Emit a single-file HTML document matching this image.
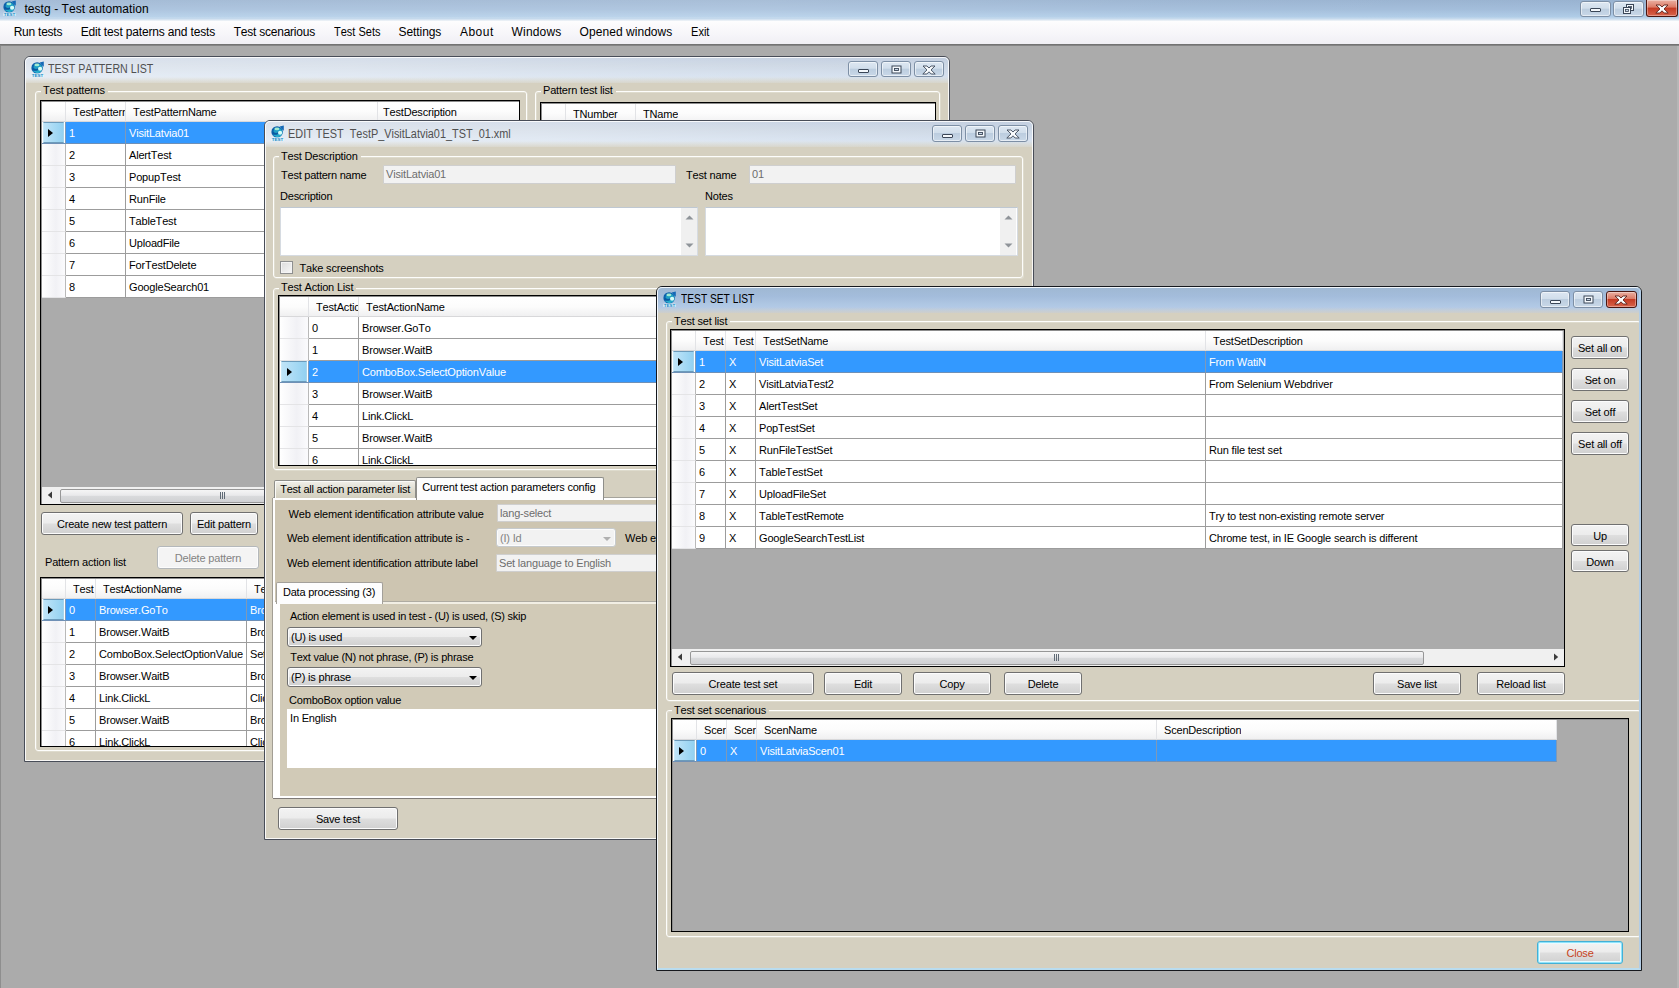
<!DOCTYPE html><html><head><meta charset="utf-8"><title>testg - Test automation</title><style>
html,body{margin:0;padding:0}
body{width:1679px;height:988px;overflow:hidden;background:#ababab;position:relative;font-family:"Liberation Sans",sans-serif;font-size:11px;color:#000;letter-spacing:-0.18px;font-kerning:none}
div,span{box-sizing:border-box}
.a{position:absolute}
.t{position:absolute;white-space:nowrap;line-height:13px;height:13px}
.ui{font-size:12px;letter-spacing:0;transform-origin:0 50%}
#tb{left:0;top:0;width:1679px;height:21px;background:linear-gradient(180deg,#98b2d0 0,#a1bcda 45%,#afcce7 80%,#c9dcee 90%,#f3f5f8 100%)}
#tbf{left:0;top:0;width:1679px;height:18px;background:linear-gradient(90deg,rgba(255,255,255,.12) 0,rgba(255,255,255,.16) 45%,rgba(255,255,255,.06) 70%,rgba(255,255,255,0) 100%)}
#mb{left:0;top:21px;width:1679px;height:23px;background:linear-gradient(180deg,#fdfdfe 0,#f6f5f9 60%,#f0eff4 100%)}
#ml{left:0;top:44px;width:1679px;height:2px;background:linear-gradient(180deg,#6a6a6a,#8e8e8e)}
#mr{left:1677px;top:46px;width:2px;height:942px;background:#b6b6b6}
#mlft{left:0;top:46px;width:1px;height:942px;background:#8e8e8e}
.win{position:absolute;border:1px solid #484d58;border-radius:6px 6px 0 0;background:#d5d0c0;overflow:hidden}
.win .tl{position:absolute;left:0;top:0;right:0;height:26px}
.win.in .tl{background:linear-gradient(90deg,rgba(255,255,255,.42) 0,rgba(255,255,255,.34) 35%,rgba(255,255,255,.16) 70%,rgba(255,255,255,.04) 100%),linear-gradient(180deg,#bfccdf 0,#c9d4e2 30%,#d2deed 70%,#dbe3ea 100%)}
.win.ac .tl{background:linear-gradient(180deg,#9fb8d2 0,#a3bcdb 35%,#b0c8e4 70%,#b9cdec 100%)}
.win .tf{position:absolute;left:0;top:20px;right:0;height:8px;background:linear-gradient(180deg,rgba(213,208,192,0),#d5d0c0)}
.win .hl{position:absolute;left:0;top:0;right:0;bottom:0;border:1px solid rgba(255,255,255,.85);border-radius:5px 5px 0 0;pointer-events:none}
.win.ac{border-color:#15181d}
.win.ac .hl{border-color:#f2f7fc #b3cde6 #b9dcef #f2f7fc;border-width:1px 2px 2px 1px}
.cap{position:absolute;border-radius:3px;border:1px solid #7d8fa5;background:linear-gradient(180deg,#dde7f2 0,#d1deeb 45%,#bccddf 50%,#c9d8e8 100%);box-shadow:inset 0 0 0 1px rgba(255,255,255,.55)}
.cap.x{border-color:#4a1610;background:linear-gradient(180deg,#eab0a2 0,#dc7a66 45%,#c43b24 50%,#d8644c 100%);box-shadow:inset 0 0 0 1px rgba(255,255,255,.35)}
.cap.m{border-radius:0 0 3px 3px;border-top:0}
.gb{position:absolute;border:1px solid #fdfdfb;border-radius:3px;box-shadow:inset 1px 1px 0 #dedbcd,1px 1px 0 #dedbcd}
.gb>span{position:absolute;top:-8px;left:5px;background:#d5d0c0;padding:0 3px 0 2px;line-height:13px;white-space:nowrap}
.btn{position:absolute;border:1px solid #707070;border-radius:3px;background:linear-gradient(180deg,#f3f3f3 0,#ececec 48%,#dedede 52%,#d0d0d0 100%);box-shadow:inset 0 0 0 1px #fcfcfc;text-align:center;white-space:nowrap}
.btn.dis{border-color:#b4b8bb;background:#f4f4f4;color:#838383}
.grid{position:absolute;border:1px solid #000;background:#ababab;overflow:hidden}
.grid>.in{position:absolute;left:0;top:0;right:0;bottom:0;border:1px solid #8d8d8d;border-right:0;border-bottom:0;pointer-events:none}
.gh{position:absolute;top:1px;height:20px;background:linear-gradient(180deg,#ffffff 0,#fcfcfc 50%,#f0f0f1 100%);border-bottom:1px solid #d8d8da;border-right:1px solid #e2e3e6}
.gh span,.gc span{position:absolute;top:4px;white-space:nowrap;line-height:13px}
.gc span{top:5px}
.gc{position:absolute;height:22px;background:#fff;border-right:1px solid #9c9c9c;border-bottom:1px solid #9c9c9c;overflow:hidden}
.gc.rh{background:linear-gradient(90deg,#ffffff 0,#f1f1f5 60%,#fbfbfd 100%);border-right:1px solid #b9b9b9;border-bottom:1px solid #e4e4e6}
.gc.rh.sel{background:#fff}
.gc.rh.sel>b{position:absolute;left:1px;top:0;right:1px;bottom:0;background:linear-gradient(90deg,#bfe4f8,#93d1f1);border:1px solid #6c9bbb;border-left-color:#c9eafa;border-right-color:#a5d5ee}
.gc.sel{background:#3399ff;color:#fff;border-right-color:#7e99b8;border-bottom-color:#6f90b6}
.tri{position:absolute;width:0;height:0;border-left:5px solid #000;border-top:4.5px solid transparent;border-bottom:4.5px solid transparent}
.tx{position:absolute;background:#fff;border:1px solid #d6dbe1;border-top-color:#bfc8d2}
.tx.dis{background:#f2f2f2;border-color:#cfcfcf;color:#6d6d6d;border-radius:1px}
.tx span{position:absolute;left:2px;top:2px;white-space:nowrap;line-height:13px}
.cb{position:absolute;border:1px solid #707070;border-radius:3px;background:linear-gradient(180deg,#f3f3f3 0,#ececec 48%,#dedede 52%,#d0d0d0 100%);box-shadow:inset 0 0 0 1px #fcfcfc}
.cb span{position:absolute;left:3px;top:3px;white-space:nowrap;line-height:13px}
.cb i{position:absolute;right:4px;top:8px;width:0;height:0;border-top:4.5px solid #000;border-left:4px solid transparent;border-right:4px solid transparent}
.cb.dis{border-color:#c6cacd;background:#f2f2f2;color:#838383}
.cb.dis i{border-top-color:#b0b0b0}
.sb{position:absolute;background:#f0f0f0}
.th{position:absolute;border:1px solid #979797;border-radius:2px;background:linear-gradient(180deg,#f5f5f5 0,#e9e9eb 45%,#d9dadc 50%,#d0d1d4 100%)}
</style></head><body>
<div id="tb" class="a"></div><div id="tbf" class="a"></div><div id="mb" class="a"></div><div id="ml" class="a"></div><div id="mr" class="a"></div><div id="mlft" class="a"></div>
<svg class="a" style="left:2.6px;top:0.4px" width="13" height="16" viewBox="0 0 13 16"><circle cx="6.1" cy="6.9" r="5.7" fill="#0c62ab"/><circle cx="6.9" cy="7.2" r="4.5" fill="#1f9fc4"/><path d="M1.2 8.2C2.6 10.4 6.6 10.2 8.6 7.4L7.6 6.8C6 8.4 3.6 8.4 2 6.6Z" fill="#0a5aa2"/><ellipse cx="5.9" cy="3.9" rx="2.5" ry="1.3" fill="#a2ebd2"/><ellipse cx="9.1" cy="7.8" rx="2.1" ry="2" fill="#d6fdf8"/><path d="M1.6 9.6C3.4 12 8 12.4 10.4 10.2C8 11.2 4.2 11 1.6 9.6Z" fill="#35c4d8"/><path d="M8.6 1.5L12.8 0.4L12.8 5.8L10.9 4.3C10.3 3.2 9.5 2.3 8.6 1.5Z" fill="#1468b6"/><rect x="0.4" y="12.7" width="12.2" height="3.1" fill="#e2faff"/><text x="0.7" y="15.7" font-size="3.9" font-weight="bold" font-family="Liberation Sans,sans-serif" fill="#2384c4" textLength="11.6" lengthAdjust="spacingAndGlyphs" style="letter-spacing:0">TEST</text></svg>
<div class="t ui" style="left:24.4px;top:2px;color:#000;line-height:15px;height:15px;letter-spacing:0.068px;">testg - Test automation</div>
<div class="t ui" style="left:13.7px;top:25px;color:#000;line-height:15px;height:15px;letter-spacing:-0.248px;">Run tests</div>
<div class="t ui" style="left:80.7px;top:25px;color:#000;line-height:15px;height:15px;letter-spacing:-0.165px;">Edit test paterns and tests</div>
<div class="t ui" style="left:233.7px;top:25px;color:#000;line-height:15px;height:15px;letter-spacing:-0.230px;">Test scenarious</div>
<div class="t ui" style="left:333.6px;top:25px;color:#000;line-height:15px;height:15px;transform:scaleX(0.9168);">Test Sets</div>
<div class="t ui" style="left:398.6px;top:25px;color:#000;line-height:15px;height:15px;letter-spacing:-0.094px;">Settings</div>
<div class="t ui" style="left:459.9px;top:25px;color:#000;line-height:15px;height:15px;letter-spacing:0.524px;">About</div>
<div class="t ui" style="left:511.6px;top:25px;color:#000;line-height:15px;height:15px;letter-spacing:0.171px;">Windows</div>
<div class="t ui" style="left:579.6px;top:25px;color:#000;line-height:15px;height:15px;letter-spacing:0.051px;">Opened windows</div>
<div class="t ui" style="left:690.6px;top:25px;color:#000;line-height:15px;height:15px;transform:scaleX(0.9223);">Exit</div>
<div class="cap" style="left:1580px;top:1px;width:31px;height:16px"><svg class="a" style="left:8px;top:5px" width="13" height="6"><rect x="1.5" y="1.5" width="10" height="3" rx=".5" fill="#f4f8fc" stroke="#3a4657" stroke-width="1"/></svg></div>
<div class="cap" style="left:1613px;top:1px;width:31px;height:16px"><svg class="a" style="left:8px;top:1px" width="13" height="12"><rect x="4.5" y="1.5" width="7" height="6" fill="#f4f8fc" stroke="#3a4657"/><rect x="6.5" y="3.5" width="3" height="2" fill="#c8d6e6" stroke="#3a4657" stroke-width=".8"/><rect x="1.5" y="4.5" width="7" height="6" fill="#f4f8fc" stroke="#3a4657"/><rect x="3.5" y="6.5" width="3" height="2" fill="#c8d6e6" stroke="#3a4657" stroke-width=".8"/></svg></div>
<div class="cap x m" style="left:1646px;top:0px;width:32px;height:17px"><svg class="a" style="left:8px;top:4px" width="14" height="10"><path d="M1 1h3.9l2.1 2 2.1-2h3.9l-4 3.9 4.2 4.1h-4l-2.2-2.2-2.2 2.2h-4l4.2-4.1z" fill="#fafcfe" stroke="#5a2018" stroke-width=".9" stroke-linejoin="round"/></svg></div>
<div class="win in" style="left:24px;top:56px;width:926px;height:706px">
<div class="tl"></div><div class="tf"></div>
<svg class="a" style="left:5.5px;top:4px" width="13" height="16" viewBox="0 0 13 16"><circle cx="6.1" cy="6.9" r="5.7" fill="#0c62ab"/><circle cx="6.9" cy="7.2" r="4.5" fill="#1f9fc4"/><path d="M1.2 8.2C2.6 10.4 6.6 10.2 8.6 7.4L7.6 6.8C6 8.4 3.6 8.4 2 6.6Z" fill="#0a5aa2"/><ellipse cx="5.9" cy="3.9" rx="2.5" ry="1.3" fill="#a2ebd2"/><ellipse cx="9.1" cy="7.8" rx="2.1" ry="2" fill="#d6fdf8"/><path d="M1.6 9.6C3.4 12 8 12.4 10.4 10.2C8 11.2 4.2 11 1.6 9.6Z" fill="#35c4d8"/><path d="M8.6 1.5L12.8 0.4L12.8 5.8L10.9 4.3C10.3 3.2 9.5 2.3 8.6 1.5Z" fill="#1468b6"/><rect x="0.4" y="12.7" width="12.2" height="3.1" fill="#e2faff"/><text x="0.7" y="15.7" font-size="3.9" font-weight="bold" font-family="Liberation Sans,sans-serif" fill="#2384c4" textLength="11.6" lengthAdjust="spacingAndGlyphs" style="letter-spacing:0">TEST</text></svg>
<div class="t ui" style="left:23.4px;top:5px;color:#505050;line-height:15px;height:15px;transform:scaleX(0.8866);">TEST PATTERN LIST</div>
<div class="cap" style="left:823px;top:4px;width:30px;height:16px"><svg class="a" style="left:8px;top:6px" width="13" height="6"><rect x="1.5" y="1.5" width="10" height="3" rx=".5" fill="#f4f8fc" stroke="#3a4657" stroke-width="1"/></svg></div>
<div class="cap" style="left:856px;top:4px;width:30px;height:16px"><svg class="a" style="left:9px;top:3px" width="11" height="9"><rect x="1" y="1" width="9" height="7" fill="#f4f8fc" stroke="#3a4657"/><rect x="3.5" y="3.5" width="4" height="2" fill="#c8d6e6" stroke="#3a4657" stroke-width=".9"/></svg></div>
<div class="cap" style="left:889px;top:4px;width:30px;height:16px"><svg class="a" style="left:7px;top:3px" width="14" height="10"><path d="M1 1h3.9l2.1 2 2.1-2h3.9l-4 3.9 4.2 4.1h-4l-2.2-2.2-2.2 2.2h-4l4.2-4.1z" fill="#fafcfe" stroke="#3a4657" stroke-width=".9" stroke-linejoin="round"/></svg></div>
<div class="gb" style="left:10px;top:34px;width:492px;height:660px"><span style="top:-8px">Test patterns</span></div>
<div class="gb" style="left:510px;top:34px;width:405px;height:660px"><span style="top:-8px">Pattern test list</span></div>
<div class="grid" style="left:15px;top:43px;width:480px;height:405px">
<div class="gh" style="left:1px;width:24px"></div>
<div class="gh" style="left:25px;width:60px"><span style="left:7px;max-width:52px;overflow:hidden">TestPattern</span></div>
<div class="gh" style="left:85px;width:252px"><span style="left:7px;max-width:244px;overflow:hidden">TestPatternName</span></div>
<div class="gh" style="left:337px;width:200px"><span style="left:5px;max-width:194px;overflow:hidden">TestDescription</span></div>
<div class="gc rh sel" style="left:1px;top:21px;width:24px"><b></b><div class="tri" style="left:6px;top:7px"></div></div>
<div class="gc sel" style="left:25px;top:21px;width:60px"><span style="left:3px">1</span></div>
<div class="gc sel" style="left:85px;top:21px;width:252px"><span style="left:3px">VisitLatvia01</span></div>
<div class="gc sel" style="left:337px;top:21px;width:200px"><span style="left:3px"></span></div>
<div class="gc rh" style="left:1px;top:43px;width:24px"></div>
<div class="gc" style="left:25px;top:43px;width:60px"><span style="left:3px">2</span></div>
<div class="gc" style="left:85px;top:43px;width:252px"><span style="left:3px">AlertTest</span></div>
<div class="gc" style="left:337px;top:43px;width:200px"><span style="left:3px"></span></div>
<div class="gc rh" style="left:1px;top:65px;width:24px"></div>
<div class="gc" style="left:25px;top:65px;width:60px"><span style="left:3px">3</span></div>
<div class="gc" style="left:85px;top:65px;width:252px"><span style="left:3px">PopupTest</span></div>
<div class="gc" style="left:337px;top:65px;width:200px"><span style="left:3px"></span></div>
<div class="gc rh" style="left:1px;top:87px;width:24px"></div>
<div class="gc" style="left:25px;top:87px;width:60px"><span style="left:3px">4</span></div>
<div class="gc" style="left:85px;top:87px;width:252px"><span style="left:3px">RunFile</span></div>
<div class="gc" style="left:337px;top:87px;width:200px"><span style="left:3px"></span></div>
<div class="gc rh" style="left:1px;top:109px;width:24px"></div>
<div class="gc" style="left:25px;top:109px;width:60px"><span style="left:3px">5</span></div>
<div class="gc" style="left:85px;top:109px;width:252px"><span style="left:3px">TableTest</span></div>
<div class="gc" style="left:337px;top:109px;width:200px"><span style="left:3px"></span></div>
<div class="gc rh" style="left:1px;top:131px;width:24px"></div>
<div class="gc" style="left:25px;top:131px;width:60px"><span style="left:3px">6</span></div>
<div class="gc" style="left:85px;top:131px;width:252px"><span style="left:3px">UploadFile</span></div>
<div class="gc" style="left:337px;top:131px;width:200px"><span style="left:3px"></span></div>
<div class="gc rh" style="left:1px;top:153px;width:24px"></div>
<div class="gc" style="left:25px;top:153px;width:60px"><span style="left:3px">7</span></div>
<div class="gc" style="left:85px;top:153px;width:252px"><span style="left:3px">ForTestDelete</span></div>
<div class="gc" style="left:337px;top:153px;width:200px"><span style="left:3px"></span></div>
<div class="gc rh" style="left:1px;top:175px;width:24px"></div>
<div class="gc" style="left:25px;top:175px;width:60px"><span style="left:3px">8</span></div>
<div class="gc" style="left:85px;top:175px;width:252px"><span style="left:3px">GoogleSearch01</span></div>
<div class="gc" style="left:337px;top:175px;width:200px"><span style="left:3px"></span></div>
<div class="sb" style="left:1px;top:386px;width:477px;height:17px"></div>
<div class="th" style="left:19px;top:388px;width:326px;height:14px"></div>
<svg class="a" style="left:178px;top:391px" width="8" height="8"><path d="M1.5 0v7M3.5 0v7M5.5 0v7" stroke="#5f6a75" stroke-width="1"/></svg>
<svg class="a" style="left:6px;top:390px" width="6" height="9"><path d="M5 0.5L0.8 4L5 7.5z" fill="#3c3c3c"/></svg>
<div class="in"></div></div>
<div class="grid" style="left:515px;top:45px;width:396px;height:300px">
<div class="gh" style="left:1px;width:24px"></div>
<div class="gh" style="left:25px;width:70px"><span style="left:7px;max-width:62px;overflow:hidden">TNumber</span></div>
<div class="gh" style="left:95px;width:300px"><span style="left:7px;max-width:292px;overflow:hidden">TName</span></div>
<div class="in"></div></div>
<div class="btn " style="left:16px;top:455px;width:142px;height:23px;line-height:23px;">Create new test pattern</div>
<div class="btn " style="left:165px;top:455px;width:68px;height:23px;line-height:23px;">Edit pattern</div>
<div class="btn dis" style="left:132px;top:489px;width:102px;height:23px;line-height:23px;">Delete pattern</div>
<div class="t " style="left:20px;top:499px;">Pattern action list</div>
<div class="grid" style="left:15px;top:520px;width:480px;height:170px">
<div class="gh" style="left:1px;width:24px"></div>
<div class="gh" style="left:25px;width:30px"><span style="left:7px;max-width:22px;overflow:hidden">Test</span></div>
<div class="gh" style="left:55px;width:151px"><span style="left:7px;max-width:143px;overflow:hidden">TestActionName</span></div>
<div class="gh" style="left:206px;width:200px"><span style="left:7px;max-width:192px;overflow:hidden">TestDescription</span></div>
<div class="gc rh sel" style="left:1px;top:21px;width:24px"><b></b><div class="tri" style="left:6px;top:7px"></div></div>
<div class="gc sel" style="left:25px;top:21px;width:30px"><span style="left:3px">0</span></div>
<div class="gc sel" style="left:55px;top:21px;width:151px"><span style="left:3px">Browser.GoTo</span></div>
<div class="gc sel" style="left:206px;top:21px;width:200px"><span style="left:3px">Bro</span></div>
<div class="gc rh" style="left:1px;top:43px;width:24px"></div>
<div class="gc" style="left:25px;top:43px;width:30px"><span style="left:3px">1</span></div>
<div class="gc" style="left:55px;top:43px;width:151px"><span style="left:3px">Browser.WaitB</span></div>
<div class="gc" style="left:206px;top:43px;width:200px"><span style="left:3px">Bro</span></div>
<div class="gc rh" style="left:1px;top:65px;width:24px"></div>
<div class="gc" style="left:25px;top:65px;width:30px"><span style="left:3px">2</span></div>
<div class="gc" style="left:55px;top:65px;width:151px"><span style="left:3px">ComboBox.SelectOptionValue</span></div>
<div class="gc" style="left:206px;top:65px;width:200px"><span style="left:3px">Set</span></div>
<div class="gc rh" style="left:1px;top:87px;width:24px"></div>
<div class="gc" style="left:25px;top:87px;width:30px"><span style="left:3px">3</span></div>
<div class="gc" style="left:55px;top:87px;width:151px"><span style="left:3px">Browser.WaitB</span></div>
<div class="gc" style="left:206px;top:87px;width:200px"><span style="left:3px">Bro</span></div>
<div class="gc rh" style="left:1px;top:109px;width:24px"></div>
<div class="gc" style="left:25px;top:109px;width:30px"><span style="left:3px">4</span></div>
<div class="gc" style="left:55px;top:109px;width:151px"><span style="left:3px">Link.ClickL</span></div>
<div class="gc" style="left:206px;top:109px;width:200px"><span style="left:3px">Clic</span></div>
<div class="gc rh" style="left:1px;top:131px;width:24px"></div>
<div class="gc" style="left:25px;top:131px;width:30px"><span style="left:3px">5</span></div>
<div class="gc" style="left:55px;top:131px;width:151px"><span style="left:3px">Browser.WaitB</span></div>
<div class="gc" style="left:206px;top:131px;width:200px"><span style="left:3px">Bro</span></div>
<div class="gc rh" style="left:1px;top:153px;width:24px"></div>
<div class="gc" style="left:25px;top:153px;width:30px"><span style="left:3px">6</span></div>
<div class="gc" style="left:55px;top:153px;width:151px"><span style="left:3px">Link.ClickL</span></div>
<div class="gc" style="left:206px;top:153px;width:200px"><span style="left:3px">Clic</span></div>
<div class="in"></div></div>
<div class="hl"></div></div>
<div class="win in" style="left:264px;top:120px;width:770px;height:720px">
<div class="tl"></div><div class="tf"></div>
<svg class="a" style="left:5.5px;top:4px" width="13" height="16" viewBox="0 0 13 16"><circle cx="6.1" cy="6.9" r="5.7" fill="#0c62ab"/><circle cx="6.9" cy="7.2" r="4.5" fill="#1f9fc4"/><path d="M1.2 8.2C2.6 10.4 6.6 10.2 8.6 7.4L7.6 6.8C6 8.4 3.6 8.4 2 6.6Z" fill="#0a5aa2"/><ellipse cx="5.9" cy="3.9" rx="2.5" ry="1.3" fill="#a2ebd2"/><ellipse cx="9.1" cy="7.8" rx="2.1" ry="2" fill="#d6fdf8"/><path d="M1.6 9.6C3.4 12 8 12.4 10.4 10.2C8 11.2 4.2 11 1.6 9.6Z" fill="#35c4d8"/><path d="M8.6 1.5L12.8 0.4L12.8 5.8L10.9 4.3C10.3 3.2 9.5 2.3 8.6 1.5Z" fill="#1468b6"/><rect x="0.4" y="12.7" width="12.2" height="3.1" fill="#e2faff"/><text x="0.7" y="15.7" font-size="3.9" font-weight="bold" font-family="Liberation Sans,sans-serif" fill="#2384c4" textLength="11.6" lengthAdjust="spacingAndGlyphs" style="letter-spacing:0">TEST</text></svg>
<div class="t ui" style="left:22.6px;top:6px;color:#505050;line-height:15px;height:15px;transform:scaleX(0.9076);">EDIT TEST&nbsp; TestP_VisitLatvia01_TST_01.xml</div>
<div class="cap" style="left:667px;top:4px;width:30px;height:17px"><svg class="a" style="left:8px;top:7px" width="13" height="6"><rect x="1.5" y="1.5" width="10" height="3" rx=".5" fill="#f4f8fc" stroke="#3a4657" stroke-width="1"/></svg></div>
<div class="cap" style="left:700px;top:4px;width:30px;height:17px"><svg class="a" style="left:9px;top:3px" width="11" height="9"><rect x="1" y="1" width="9" height="7" fill="#f4f8fc" stroke="#3a4657"/><rect x="3.5" y="3.5" width="4" height="2" fill="#c8d6e6" stroke="#3a4657" stroke-width=".9"/></svg></div>
<div class="cap" style="left:733px;top:4px;width:30px;height:17px"><svg class="a" style="left:7px;top:3px" width="14" height="10"><path d="M1 1h3.9l2.1 2 2.1-2h3.9l-4 3.9 4.2 4.1h-4l-2.2-2.2-2.2 2.2h-4l4.2-4.1z" fill="#fafcfe" stroke="#3a4657" stroke-width=".9" stroke-linejoin="round"/></svg></div>
<div class="gb" style="left:8px;top:35px;width:750px;height:122px"><span style="top:-7px">Test Description</span></div>
<div class="t " style="left:16.1px;top:48px;letter-spacing:-0.240px;">Test pattern name</div>
<div class="tx dis" style="left:118px;top:44px;width:293px;height:19px;"><span>VisitLatvia01</span></div>
<div class="t " style="left:421px;top:48px;">Test name</div>
<div class="tx dis" style="left:484px;top:44px;width:267px;height:19px;"><span>01</span></div>
<div class="t " style="left:15.1px;top:69px;letter-spacing:-0.261px;">Description</div>
<div class="tx" style="left:15px;top:86px;width:418px;height:49px;"><span></span></div>
<div class="t " style="left:440px;top:69px;">Notes</div>
<div class="tx" style="left:440px;top:86px;width:313px;height:49px;"><span></span></div>
<div class="a" style="left:416px;top:87px;width:16px;height:47px;background:#f0f0f0"></div>
<svg class="a" style="left:420px;top:94px" width="9" height="5"><path d="M0.5 4.5L4.5 0.5L8.5 4.5z" fill="#8f9499"/></svg>
<svg class="a" style="left:420px;top:122px" width="9" height="5"><path d="M0.5 0.5L4.5 4.5L8.5 0.5z" fill="#8f9499"/></svg>
<div class="a" style="left:735px;top:87px;width:16px;height:47px;background:#f0f0f0"></div>
<svg class="a" style="left:739px;top:94px" width="9" height="5"><path d="M0.5 4.5L4.5 0.5L8.5 4.5z" fill="#8f9499"/></svg>
<svg class="a" style="left:739px;top:122px" width="9" height="5"><path d="M0.5 0.5L4.5 4.5L8.5 0.5z" fill="#8f9499"/></svg>
<div class="a" style="left:15px;top:140px;width:13px;height:13px;border:1px solid #8e8f8f;background:linear-gradient(135deg,#dcdcdc,#f8f8f8);box-shadow:inset 0 0 0 1px #f4f4f4"></div>
<div class="t " style="left:34.4px;top:141px;letter-spacing:-0.160px;">Take screenshots</div>
<div class="gb" style="left:8px;top:167px;width:760px;height:182px"><span style="top:-8px">Test Action List</span></div>
<div class="grid" style="left:13px;top:174px;width:700px;height:171px">
<div class="gh" style="left:1px;width:29px"></div>
<div class="gh" style="left:30px;width:50px"><span style="left:7px;max-width:42px;overflow:hidden">TestActic</span></div>
<div class="gh" style="left:80px;width:600px"><span style="left:7px;max-width:592px;overflow:hidden">TestActionName</span></div>
<div class="gc rh" style="left:1px;top:21px;width:29px"></div>
<div class="gc" style="left:30px;top:21px;width:50px"><span style="left:3px">0</span></div>
<div class="gc" style="left:80px;top:21px;width:600px"><span style="left:3px">Browser.GoTo</span></div>
<div class="gc rh" style="left:1px;top:43px;width:29px"></div>
<div class="gc" style="left:30px;top:43px;width:50px"><span style="left:3px">1</span></div>
<div class="gc" style="left:80px;top:43px;width:600px"><span style="left:3px">Browser.WaitB</span></div>
<div class="gc rh sel" style="left:1px;top:65px;width:29px"><b></b><div class="tri" style="left:7px;top:7px"></div></div>
<div class="gc sel" style="left:30px;top:65px;width:50px"><span style="left:3px">2</span></div>
<div class="gc sel" style="left:80px;top:65px;width:600px"><span style="left:3px">ComboBox.SelectOptionValue</span></div>
<div class="gc rh" style="left:1px;top:87px;width:29px"></div>
<div class="gc" style="left:30px;top:87px;width:50px"><span style="left:3px">3</span></div>
<div class="gc" style="left:80px;top:87px;width:600px"><span style="left:3px">Browser.WaitB</span></div>
<div class="gc rh" style="left:1px;top:109px;width:29px"></div>
<div class="gc" style="left:30px;top:109px;width:50px"><span style="left:3px">4</span></div>
<div class="gc" style="left:80px;top:109px;width:600px"><span style="left:3px">Link.ClickL</span></div>
<div class="gc rh" style="left:1px;top:131px;width:29px"></div>
<div class="gc" style="left:30px;top:131px;width:50px"><span style="left:3px">5</span></div>
<div class="gc" style="left:80px;top:131px;width:600px"><span style="left:3px">Browser.WaitB</span></div>
<div class="gc rh" style="left:1px;top:153px;width:29px"></div>
<div class="gc" style="left:30px;top:153px;width:50px"><span style="left:3px">6</span></div>
<div class="gc" style="left:80px;top:153px;width:600px"><span style="left:3px">Link.ClickL</span></div>
<div class="in"></div></div>
<div class="a" style="left:8px;top:377px;width:760px;height:300px;background:#cdc5b1;border:1px solid #fff;border-width:2px 1px 3px 2px;box-shadow:0 1px 0 #7f7a76,-1px 0 0 #a29e94,0 -1px 0 #a5a39b"></div>
<div class="a" style="left:9px;top:359px;width:142px;height:18px;border:1px solid #8e8e8a;border-bottom:0;border-radius:2px 2px 0 0;background:linear-gradient(180deg,#f1f0ea,#dcd9cb 60%,#d3cfbf);box-shadow:inset 1px 1px 0 #fbfbf8"></div>
<div class="t " style="left:15.3px;top:362px;letter-spacing:-0.263px;">Test all action parameter list</div>
<div class="a" style="left:151px;top:356px;width:188px;height:23px;background:#fdfdfd;border:1px solid #8e8e8a;border-bottom:0;border-radius:2px 2px 0 0"></div>
<div class="t " style="left:157.3px;top:360px;letter-spacing:-0.210px;">Current test action parameters config</div>
<div class="t " style="left:23.6px;top:387px;letter-spacing:-0.146px;">Web element identification attribute value</div>
<div class="tx dis" style="left:232px;top:383px;width:300px;height:18px;"><span>lang-select</span></div>
<div class="t " style="left:21.9px;top:411px;letter-spacing:-0.172px;">Web element identification attribute is -</div>
<div class="cb dis" style="left:231px;top:407px;width:120px;height:19px"><span>(I) Id</span><i></i></div>
<div class="t " style="left:360px;top:411px;">Web element</div>
<div class="t " style="left:21.9px;top:436px;letter-spacing:-0.175px;">Web element identification attribute label</div>
<div class="tx dis" style="left:231px;top:433px;width:300px;height:18px;"><span>Set language to English</span></div>
<div class="a" style="left:10px;top:481px;width:760px;height:194px;background:#d1cab7;border:1px solid #fff;border-width:2px 1px 0 5px;border-top-color:#f1eee4;box-shadow:0 -1px 0 #aeaba2"></div>
<div class="a" style="left:11px;top:461px;width:107px;height:22px;background:#fdfdfd;border:1px solid #a3a09a;border-bottom:0;border-radius:2px 2px 0 0"></div>
<div class="t " style="left:17.9px;top:465px;letter-spacing:-0.199px;">Data processing (3)</div>
<div class="t " style="left:24.9px;top:489px;letter-spacing:-0.246px;">Action element is used in test - (U) is used, (S) skip</div>
<div class="cb" style="left:22px;top:506px;width:195px;height:20px"><span>(U) is used</span><i></i></div>
<div class="t " style="left:25.2px;top:530px;letter-spacing:-0.235px;">Text value (N) not phrase, (P) is phrase</div>
<div class="cb" style="left:22px;top:546px;width:195px;height:20px"><span>(P) is phrase</span><i></i></div>
<div class="t " style="left:24.1px;top:573px;letter-spacing:-0.229px;">ComboBox option value</div>
<div class="tx" style="left:22px;top:588px;width:500px;height:59px;border-color:#fff"><span>In English</span></div>
<div class="btn " style="left:13px;top:686px;width:120px;height:23px;line-height:23px;">Save test</div>
<div class="hl"></div></div>
<div class="win ac" style="left:656px;top:286px;width:986px;height:685px">
<div class="tl"></div><div class="tf"></div>
<svg class="a" style="left:5.5px;top:4px" width="13" height="16" viewBox="0 0 13 16"><circle cx="6.1" cy="6.9" r="5.7" fill="#0c62ab"/><circle cx="6.9" cy="7.2" r="4.5" fill="#1f9fc4"/><path d="M1.2 8.2C2.6 10.4 6.6 10.2 8.6 7.4L7.6 6.8C6 8.4 3.6 8.4 2 6.6Z" fill="#0a5aa2"/><ellipse cx="5.9" cy="3.9" rx="2.5" ry="1.3" fill="#a2ebd2"/><ellipse cx="9.1" cy="7.8" rx="2.1" ry="2" fill="#d6fdf8"/><path d="M1.6 9.6C3.4 12 8 12.4 10.4 10.2C8 11.2 4.2 11 1.6 9.6Z" fill="#35c4d8"/><path d="M8.6 1.5L12.8 0.4L12.8 5.8L10.9 4.3C10.3 3.2 9.5 2.3 8.6 1.5Z" fill="#1468b6"/><rect x="0.4" y="12.7" width="12.2" height="3.1" fill="#e2faff"/><text x="0.7" y="15.7" font-size="3.9" font-weight="bold" font-family="Liberation Sans,sans-serif" fill="#2384c4" textLength="11.6" lengthAdjust="spacingAndGlyphs" style="letter-spacing:0">TEST</text></svg>
<div class="t ui" style="left:23.6px;top:5px;color:#000;line-height:15px;height:15px;transform:scaleX(0.8521);">TEST SET LIST</div>
<div class="cap" style="left:883px;top:4px;width:30px;height:17px"><svg class="a" style="left:8px;top:7px" width="13" height="6"><rect x="1.5" y="1.5" width="10" height="3" rx=".5" fill="#f4f8fc" stroke="#3a4657" stroke-width="1"/></svg></div>
<div class="cap" style="left:916px;top:4px;width:30px;height:17px"><svg class="a" style="left:9px;top:3px" width="11" height="9"><rect x="1" y="1" width="9" height="7" fill="#f4f8fc" stroke="#3a4657"/><rect x="3.5" y="3.5" width="4" height="2" fill="#c8d6e6" stroke="#3a4657" stroke-width=".9"/></svg></div>
<div class="cap x" style="left:949px;top:4px;width:31px;height:17px"><svg class="a" style="left:7px;top:3px" width="14" height="10"><path d="M1 1h3.9l2.1 2 2.1-2h3.9l-4 3.9 4.2 4.1h-4l-2.2-2.2-2.2 2.2h-4l4.2-4.1z" fill="#fafcfe" stroke="#5a2018" stroke-width=".9" stroke-linejoin="round"/></svg></div>
<div class="gb" style="left:9px;top:34px;width:975px;height:380px"><span style="top:-7px">Test set list</span></div>
<div class="grid" style="left:13px;top:42px;width:895px;height:338px">
<div class="gh" style="left:1px;width:24px"></div>
<div class="gh" style="left:25px;width:30px"><span style="left:7px;max-width:22px;overflow:hidden">Test</span></div>
<div class="gh" style="left:55px;width:30px"><span style="left:7px;max-width:22px;overflow:hidden">Test</span></div>
<div class="gh" style="left:85px;width:450px"><span style="left:7px;max-width:442px;overflow:hidden">TestSetName</span></div>
<div class="gh" style="left:535px;width:357px"><span style="left:7px;max-width:349px;overflow:hidden">TestSetDescription</span></div>
<div class="gc rh sel" style="left:1px;top:21px;width:24px"><b></b><div class="tri" style="left:6px;top:7px"></div></div>
<div class="gc sel" style="left:25px;top:21px;width:30px"><span style="left:3px">1</span></div>
<div class="gc sel" style="left:55px;top:21px;width:30px"><span style="left:3px">X</span></div>
<div class="gc sel" style="left:85px;top:21px;width:450px"><span style="left:3px">VisitLatviaSet</span></div>
<div class="gc sel" style="left:535px;top:21px;width:357px"><span style="left:3px">From WatiN</span></div>
<div class="gc rh" style="left:1px;top:43px;width:24px"></div>
<div class="gc" style="left:25px;top:43px;width:30px"><span style="left:3px">2</span></div>
<div class="gc" style="left:55px;top:43px;width:30px"><span style="left:3px">X</span></div>
<div class="gc" style="left:85px;top:43px;width:450px"><span style="left:3px">VisitLatviaTest2</span></div>
<div class="gc" style="left:535px;top:43px;width:357px"><span style="left:3px">From Selenium Webdriver</span></div>
<div class="gc rh" style="left:1px;top:65px;width:24px"></div>
<div class="gc" style="left:25px;top:65px;width:30px"><span style="left:3px">3</span></div>
<div class="gc" style="left:55px;top:65px;width:30px"><span style="left:3px">X</span></div>
<div class="gc" style="left:85px;top:65px;width:450px"><span style="left:3px">AlertTestSet</span></div>
<div class="gc" style="left:535px;top:65px;width:357px"><span style="left:3px"></span></div>
<div class="gc rh" style="left:1px;top:87px;width:24px"></div>
<div class="gc" style="left:25px;top:87px;width:30px"><span style="left:3px">4</span></div>
<div class="gc" style="left:55px;top:87px;width:30px"><span style="left:3px">X</span></div>
<div class="gc" style="left:85px;top:87px;width:450px"><span style="left:3px">PopTestSet</span></div>
<div class="gc" style="left:535px;top:87px;width:357px"><span style="left:3px"></span></div>
<div class="gc rh" style="left:1px;top:109px;width:24px"></div>
<div class="gc" style="left:25px;top:109px;width:30px"><span style="left:3px">5</span></div>
<div class="gc" style="left:55px;top:109px;width:30px"><span style="left:3px">X</span></div>
<div class="gc" style="left:85px;top:109px;width:450px"><span style="left:3px">RunFileTestSet</span></div>
<div class="gc" style="left:535px;top:109px;width:357px"><span style="left:3px">Run file test set</span></div>
<div class="gc rh" style="left:1px;top:131px;width:24px"></div>
<div class="gc" style="left:25px;top:131px;width:30px"><span style="left:3px">6</span></div>
<div class="gc" style="left:55px;top:131px;width:30px"><span style="left:3px">X</span></div>
<div class="gc" style="left:85px;top:131px;width:450px"><span style="left:3px">TableTestSet</span></div>
<div class="gc" style="left:535px;top:131px;width:357px"><span style="left:3px"></span></div>
<div class="gc rh" style="left:1px;top:153px;width:24px"></div>
<div class="gc" style="left:25px;top:153px;width:30px"><span style="left:3px">7</span></div>
<div class="gc" style="left:55px;top:153px;width:30px"><span style="left:3px">X</span></div>
<div class="gc" style="left:85px;top:153px;width:450px"><span style="left:3px">UploadFileSet</span></div>
<div class="gc" style="left:535px;top:153px;width:357px"><span style="left:3px"></span></div>
<div class="gc rh" style="left:1px;top:175px;width:24px"></div>
<div class="gc" style="left:25px;top:175px;width:30px"><span style="left:3px">8</span></div>
<div class="gc" style="left:55px;top:175px;width:30px"><span style="left:3px">X</span></div>
<div class="gc" style="left:85px;top:175px;width:450px"><span style="left:3px">TableTestRemote</span></div>
<div class="gc" style="left:535px;top:175px;width:357px"><span style="left:3px">Try to test non-existing remote server</span></div>
<div class="gc rh" style="left:1px;top:197px;width:24px"></div>
<div class="gc" style="left:25px;top:197px;width:30px"><span style="left:3px">9</span></div>
<div class="gc" style="left:55px;top:197px;width:30px"><span style="left:3px">X</span></div>
<div class="gc" style="left:85px;top:197px;width:450px"><span style="left:3px">GoogleSearchTestList</span></div>
<div class="gc" style="left:535px;top:197px;width:357px"><span style="left:3px">Chrome test, in IE Google search is different</span></div>
<div class="sb" style="left:1px;top:319px;width:892px;height:17px"></div>
<div class="th" style="left:19px;top:321px;width:734px;height:14px"></div>
<svg class="a" style="left:382px;top:324px" width="8" height="8"><path d="M1.5 0v7M3.5 0v7M5.5 0v7" stroke="#5f6a75" stroke-width="1"/></svg>
<svg class="a" style="left:6px;top:323px" width="6" height="9"><path d="M5 0.5L0.8 4L5 7.5z" fill="#3c3c3c"/></svg>
<svg class="a" style="left:882px;top:323px" width="6" height="9"><path d="M1 0.5L5.2 4L1 7.5z" fill="#3c3c3c"/></svg>
<div class="in"></div></div>
<div class="btn " style="left:914px;top:49px;width:58px;height:23px;line-height:23px;">Set all on</div>
<div class="btn " style="left:914px;top:81px;width:58px;height:23px;line-height:23px;">Set on</div>
<div class="btn " style="left:914px;top:113px;width:58px;height:23px;line-height:23px;">Set off</div>
<div class="btn " style="left:914px;top:145px;width:58px;height:23px;line-height:23px;">Set all off</div>
<div class="btn " style="left:914px;top:237px;width:58px;height:22px;line-height:22px;">Up</div>
<div class="btn " style="left:914px;top:263px;width:58px;height:22px;line-height:22px;">Down</div>
<div class="btn " style="left:15px;top:385px;width:142px;height:23px;line-height:23px;">Create test set</div>
<div class="btn " style="left:167px;top:385px;width:78px;height:23px;line-height:23px;">Edit</div>
<div class="btn " style="left:256px;top:385px;width:78px;height:23px;line-height:23px;">Copy</div>
<div class="btn " style="left:347px;top:385px;width:78px;height:23px;line-height:23px;">Delete</div>
<div class="btn " style="left:716px;top:385px;width:88px;height:23px;line-height:23px;">Save list</div>
<div class="btn " style="left:820px;top:385px;width:88px;height:23px;line-height:23px;">Reload list</div>
<div class="gb" style="left:9px;top:423px;width:975px;height:227px"><span style="top:-7px">Test set scenarious</span></div>
<div class="grid" style="left:14px;top:431px;width:958px;height:214px">
<div class="gh" style="left:1px;width:24px"></div>
<div class="gh" style="left:25px;width:30px"><span style="left:7px;max-width:22px;overflow:hidden">Scer</span></div>
<div class="gh" style="left:55px;width:30px"><span style="left:7px;max-width:22px;overflow:hidden">Scer</span></div>
<div class="gh" style="left:85px;width:400px"><span style="left:7px;max-width:392px;overflow:hidden">ScenName</span></div>
<div class="gh" style="left:485px;width:400px"><span style="left:7px;max-width:392px;overflow:hidden">ScenDescription</span></div>
<div class="gc rh sel" style="left:1px;top:21px;width:24px"><b></b><div class="tri" style="left:6px;top:7px"></div></div>
<div class="gc sel" style="left:25px;top:21px;width:30px"><span style="left:3px">0</span></div>
<div class="gc sel" style="left:55px;top:21px;width:30px"><span style="left:3px">X</span></div>
<div class="gc sel" style="left:85px;top:21px;width:400px"><span style="left:3px">VisitLatviaScen01</span></div>
<div class="gc sel" style="left:485px;top:21px;width:400px"><span style="left:3px"></span></div>
<div class="in"></div></div>
<div class="btn " style="left:880px;top:654px;width:86px;height:23px;line-height:23px;color:#c8441c;border-color:#42b0d6;box-shadow:inset 0 0 0 1px #8fe3fb,inset 0 0 0 2px #e9fbff">Close</div>
<div class="hl"></div></div>
</body></html>
